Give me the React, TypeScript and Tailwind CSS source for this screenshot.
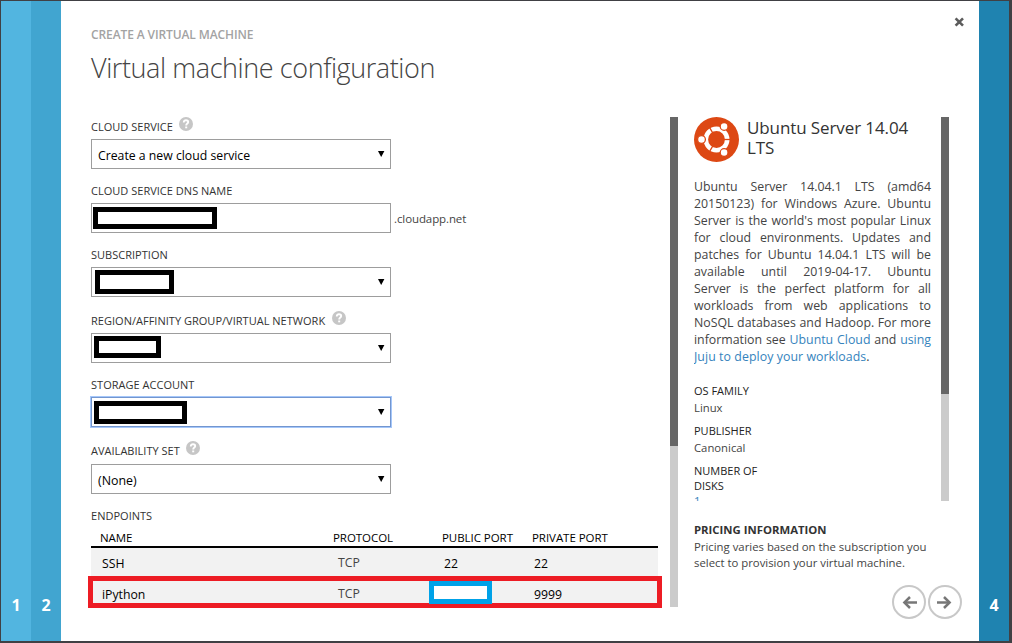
import type { ReactNode } from 'react';

function Help() {
  return (
    <svg width="14" height="14" viewBox="0 0 14 14" className="relative -top-[3px] ml-[6.5px] shrink-0">
      <circle cx="7" cy="7" r="7" fill="#c6c6c6" />
      <path d="M4.8 5.4C4.8 4 5.7 3.3 7 3.3c1.4 0 2.2.7 2.2 1.8C9.2 6.6 7.2 6.6 7.2 8.5" fill="none" stroke="#fff" strokeWidth="1.9" />
      <rect x="6.2" y="9.5" width="2" height="1.8" fill="#fff" />
    </svg>
  );
}

function Label({ children, help }: { children: ReactNode; help?: boolean }) {
  return (
    <div className="flex h-[22px] items-center pb-0.5 text-[11px] tracking-[0.02px] whitespace-nowrap text-[#333]">
      <span>{children}</span>
      {help && <Help />}
    </div>
  );
}

function Select({ children, focused }: { children?: ReactNode; focused?: boolean }) {
  return (
    <div
      className={
        focused
          ? 'flex h-[30px] w-[300px] items-center border border-[#7396cf] pr-[5px] outline outline-[#a5c7fa]'
          : 'flex h-[30px] w-[300px] items-center border border-[#9d9d9d] pr-[5px]'
      }
    >
      <div className="flex-1">{children}</div>
      <svg width="8" height="8" viewBox="0 0 8 8">
        <path d="M1 1h6.4L4.2 7z" fill="#000" />
      </svg>
    </div>
  );
}

function Line({ children }: { children: ReactNode }) {
  return <span className="block whitespace-nowrap [text-align-last:justify]">{children}</span>;
}

function UbuntuLogo() {
  return (
    <svg width="45" height="45" viewBox="0 0 45 45" className="shrink-0">
      <circle cx="22.5" cy="22.5" r="22.5" fill="#dd4814" />
      <circle cx="22.5" cy="22.5" r="10.7" fill="none" stroke="#fff" strokeWidth="4.6" />
      <g stroke="#dd4814" strokeWidth="1.3">
        <path d="M22.5 22.5H38" />
        <path d="M22.5 22.5L14.8 9.2" />
        <path d="M22.5 22.5L14.8 35.8" />
      </g>
      <g fill="#fff" stroke="#dd4814" strokeWidth="1.3">
        <circle cx="7.5" cy="22.5" r="3.9" />
        <circle cx="30.1" cy="9.4" r="3.9" />
        <circle cx="30.1" cy="35.6" r="3.9" />
      </g>
    </svg>
  );
}

function RoundArrow({ flip }: { flip?: boolean }) {
  return (
    <svg width="34" height="34" viewBox="0 0 34 34">
      <circle cx="17" cy="17" r="16" fill="#fff" stroke="#c8c8c8" strokeWidth="2" />
      <g transform={flip ? 'translate(34 0) scale(-1 1)' : undefined} fill="none" stroke="#777" strokeWidth="2.5">
        <path d="M25 17.5H12.5" />
        <path d="M18 12l-5.6 5.5 5.6 5.5" />
      </g>
    </svg>
  );
}

export default function App() {
  return (
    <div className="flex h-[643px] w-[1012px] overflow-hidden bg-[#404044] pt-px pr-[3px] pb-0.5 pl-px font-['Open_Sans','Noto_Sans',sans-serif]">
      <div className="flex w-[30px] items-end justify-center bg-[#52b5e0] pb-6 text-[16px] leading-6 font-bold text-white">1</div>
      <div className="flex w-[30px] items-end justify-center bg-[#41a5d0] pb-6 text-[16px] leading-6 font-bold text-white">2</div>

      <main className="relative flex w-[918px] flex-col bg-white pl-[30px]">
        <button className="absolute top-4 right-3.5 flex h-[11px] w-[11px]" aria-label="Close">
          <svg width="11" height="11" viewBox="0 0 11 11">
            <path d="M1.6 1.3l7.4 7.4M9 1.3l-7.4 7.4" stroke="#5c5c5c" strokeWidth="2.6" />
          </svg>
        </button>
        <header className="h-[116px] pt-[25px]">
          <div className="text-[12px] leading-[18px] font-semibold tracking-[-0.11px] text-[#a3a3a3]">CREATE A VIRTUAL MACHINE</div>
          <h1 className="pt-[5px] text-[27px] leading-[38px] font-light tracking-[-0.41px] text-[#444]">Virtual machine configuration</h1>
        </header>

        <div className="flex">
          <section className="w-[579px]">
            <Label help>CLOUD SERVICE</Label>
            <Select>
              <span className="pl-1.5 text-[12.25px] text-black">Create a new cloud service</span>
            </Select>

            <div className="pt-3">
              <Label>CLOUD SERVICE DNS NAME</Label>
              <div className="flex items-center">
                <div className="flex h-[30px] w-[300px] items-center border border-[#9d9d9d] pl-px">
                  <div className="h-[22px] w-[124px] border-[5px] border-black" />
                </div>
                <span className="pt-0.5 pl-[3px] text-[11.5px] tracking-[-0.1px] text-[#444]">.cloudapp.net</span>
              </div>
            </div>

            <div className="pt-3">
              <Label>SUBSCRIPTION</Label>
              <Select>
                <div className="ml-[3px] h-6 w-[79px] border-[5px] border-black" />
              </Select>
            </div>

            <div className="pt-3.5">
              <Label help>REGION/AFFINITY GROUP/VIRTUAL NETWORK</Label>
              <Select>
                <div className="mb-0.5 ml-0.5 h-[22px] w-[67px] border-[5px] border-black" />
              </Select>
            </div>

            <div className="pt-3">
              <Label>STORAGE ACCOUNT</Label>
              <Select focused>
                <div className="mt-px ml-0.5 h-[23px] w-[93px] border-[5px] border-black" />
              </Select>
            </div>

            <div className="pt-3.5">
              <Label help>AVAILABILITY SET</Label>
              <div className="pt-px">
                <Select>
                  <span className="pl-1.5 text-[12.4px] text-black">(None)</span>
                </Select>
              </div>
            </div>

            <div className="pt-3">
              <Label>ENDPOINTS</Label>
            </div>
            <div className="relative w-[567px] text-[12.25px] text-black">
              <div className="grid h-5 grid-cols-[233px_109px_90px_1fr] items-center border-b-2 border-black pt-px pl-[9px] text-[11.5px] tracking-[-0.05px]">
                <span>NAME</span>
                <span>PROTOCOL</span>
                <span>PUBLIC PORT</span>
                <span>PRIVATE PORT</span>
              </div>
              <div className="grid h-[29px] grid-cols-[236px_106px_90px_1fr] items-center bg-[#f2f2f2] pt-1 pl-[11px]">
                <span>SSH</span>
                <span className="pb-0.5 text-[#444]">TCP</span>
                <span>22</span>
                <span>22</span>
              </div>
              <div className="grid h-[30px] grid-cols-[236px_91px_105px_1fr] items-center bg-[#f2f2f2] pt-1 pl-[11px]">
                <span className="pt-0.5">iPython</span>
                <span className="text-[#444]">TCP</span>
                <div className="relative z-10 h-[23px] w-[63px] self-start border-[5px] border-[#00a2e8] bg-white" />
                <span className="pt-0.5">9999</span>
              </div>
              <div className="absolute -bottom-px -left-[3px] h-8 w-[574px] border-[5px] border-[#ed1c24]" />
            </div>
          </section>

          <div className="h-[490px] w-2 bg-[#cbcbcb]">
            <div className="h-[329px] bg-[#666]" />
          </div>

          <aside className="flex w-[301px] flex-col pl-4">
            <div className="flex h-[384px] overflow-hidden">
              <div className="w-[247px] pr-2.5 text-[#444]">
                <div className="flex h-[61px] gap-2">
                  <UbuntuLogo />
                  <h2 className="pt-px text-[17px] leading-[19.5px] tracking-[-0.1px] whitespace-nowrap text-[#333]">
                    Ubuntu Server 14.04
                    <br />
                    LTS
                  </h2>
                </div>
                <p className="text-[12.35px] leading-[17px]">
                  <Line>Ubuntu Server 14.04.1 LTS (amd64</Line>
                  <Line>20150123) for Windows Azure. Ubuntu</Line>
                  <Line>Server is the world's most popular Linux</Line>
                  <Line>for cloud environments. Updates and</Line>
                  <Line>patches for Ubuntu 14.04.1 LTS will be</Line>
                  <Line>available until 2019-04-17. Ubuntu</Line>
                  <Line>Server is the perfect platform for all</Line>
                  <Line>workloads from web applications to</Line>
                  <Line>NoSQL databases and Hadoop. For more</Line>
                  <Line>
                    information see <a className="text-[#3583bd]">Ubuntu Cloud</a> and <a className="text-[#3583bd]">using</a>
                  </Line>
                  <span className="block tracking-[0.06px]">
                    <a className="text-[#3583bd]">Juju to deploy your workloads</a>.
                  </span>
                </p>
                <dl className="pt-[18px] text-[11.3px]">
                  <dt className="text-[11px] leading-4 text-[#222]">OS FAMILY</dt>
                  <dd className="pt-px pb-[7px] leading-4">Linux</dd>
                  <dt className="text-[11px] leading-4 text-[#222]">PUBLISHER</dt>
                  <dd className="pt-px pb-[7px] leading-4">Canonical</dd>
                  <dt className="text-[11px] leading-[15px] text-[#222]">
                    NUMBER OF
                    <br />
                    DISKS
                  </dt>
                  <dd className="leading-4 text-[#3583bd]">1</dd>
                </dl>
              </div>
              <div className="w-2 bg-[#cbcbcb]">
                <div className="h-[277px] bg-[#666]" />
              </div>
            </div>
            <div className="pt-[21px] text-[11.35px] leading-4 whitespace-nowrap text-[#444]">
              <div className="h-[17px] font-bold text-[#333]">PRICING INFORMATION</div>
              <div>Pricing varies based on the subscription you</div>
              <div>select to provision your virtual machine.</div>
            </div>
            <div className="flex gap-0.5 pt-[14px] pl-[198px]">
              <RoundArrow />
              <RoundArrow flip />
            </div>
          </aside>
        </div>
      </main>

      <div className="flex w-[30px] items-end justify-center bg-[#1f83b0] pb-6 text-[16px] leading-6 font-bold text-white">4</div>
    </div>
  );
}
